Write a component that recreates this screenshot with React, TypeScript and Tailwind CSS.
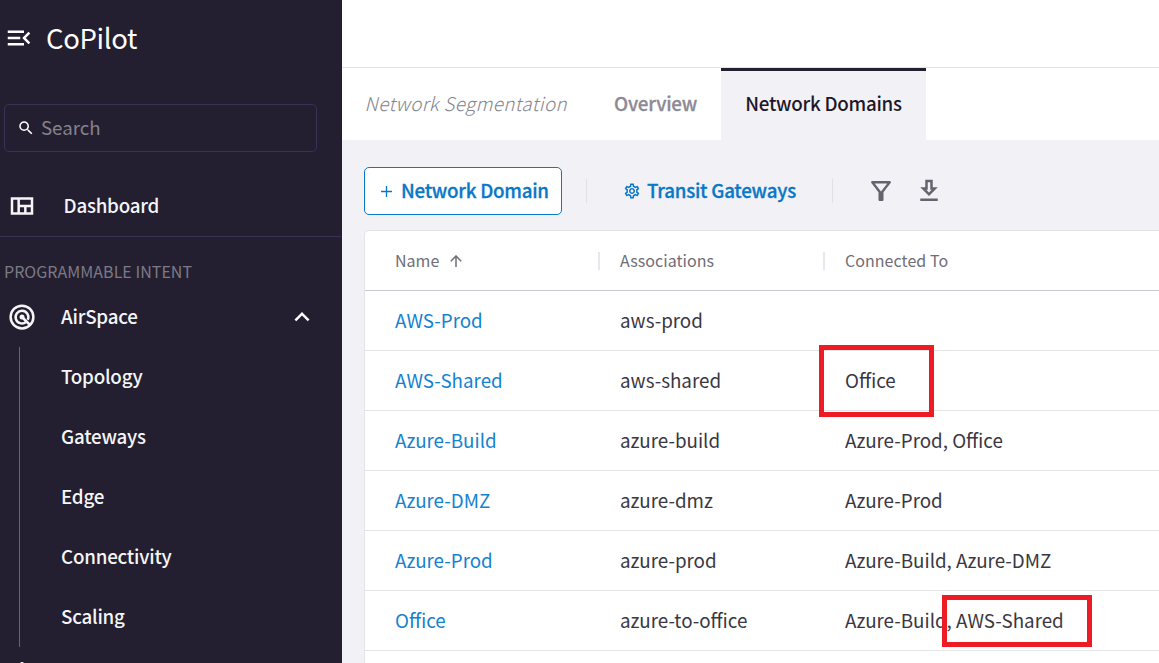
import React from "react";
import {
  MdExpandLess,
  MdMenuOpen,
  MdOutlineDownload,
  MdOutlineFilterAlt,
  MdOutlineSettings,
  MdOutlineViewQuilt,
  MdSearch,
} from "react-icons/md";

const navItems = ["Topology", "Gateways", "Edge", "Connectivity", "Scaling"];

const rows = [
  { name: "AWS-Prod", association: "aws-prod", connected: "" },
  { name: "AWS-Shared", association: "aws-shared", connected: "Office" },
  { name: "Azure-Build", association: "azure-build", connected: "Azure-Prod, Office" },
  { name: "Azure-DMZ", association: "azure-dmz", connected: "Azure-Prod" },
  { name: "Azure-Prod", association: "azure-prod", connected: "Azure-Build, Azure-DMZ" },
  { name: "Office", association: "azure-to-office", connected: "Azure-Build, AWS-Shared" },
];

function RadarIcon() {
  return (
    <svg width="30" height="30" viewBox="0 0 24 24" fill="none" stroke="currentColor" strokeWidth="2">
      <circle cx="12" cy="12" r="9.1" />
      <path d="M15.2 16A5.1 5.1 0 1 1 16.6 14.2" />
      <path d="M12 12l6.2 6.2" />
      <circle cx="12" cy="12" r="2" fill="currentColor" stroke="none" />
    </svg>
  );
}

function Sidebar() {
  return (
    <aside className="flex h-full w-[342px] shrink-0 flex-col overflow-hidden bg-[#231f30] text-[#f5f5f7]">
      <header className="flex h-[76px] shrink-0 items-center pl-[4px] text-white">
        <MdMenuOpen size={30} />
        <h1 className="ml-[12px] pb-[2px] text-[27.5px] leading-[40px] tracking-[-0.35px]">CoPilot</h1>
      </header>

      <div className="mt-[28px] ml-[4px] flex h-[48px] w-[313px] shrink-0 items-center rounded-[5px] border border-[#3a3154] pl-[12px]">
        <MdSearch size={18} className="text-white" />
        <span className="ml-[6px] pb-[2px] text-[18.75px] leading-[24px] tracking-[-0.05px] text-[#85828c]">
          Search
        </span>
      </div>

      <a className="mt-[24px] flex h-[60px] shrink-0 items-center pl-[7px]">
        <MdOutlineViewQuilt size={30} />
        <span className="ml-[26.5px] pb-[3px] text-[18.75px] leading-[24px] font-medium tracking-[-0.23px]">
          Dashboard
        </span>
      </a>
      <div className="h-px w-[341px] shrink-0 bg-[#3a3154]" />

      <h2 className="mt-[22px] shrink-0 pl-[4px] text-[16px] leading-[24px] tracking-[0.04px] text-[#7d7a85]">
        PROGRAMMABLE INTENT
      </h2>

      <a className="mt-[4px] flex h-[60px] shrink-0 items-center pl-[7px]">
        <RadarIcon />
        <span className="ml-[24px] pb-[3px] text-[18.75px] leading-[24px] font-medium tracking-[-0.2px]">
          AirSpace
        </span>
        <MdExpandLess size={30} className="mr-[25px] ml-auto text-white" />
      </a>

      <nav className="ml-[19px] flex shrink-0 flex-col border-l border-[#67646f]">
        {navItems.map((item) => (
          <a
            key={item}
            className="flex h-[60px] items-center pb-[3px] pl-[41px] text-[18.75px] leading-[24px] font-medium tracking-[-0.22px]"
          >
            {item}
          </a>
        ))}
      </nav>
      <div className="mt-[15px] ml-[20px] h-[6px] w-[4px] shrink-0 rounded-t bg-white" />
    </aside>
  );
}

function Tabs() {
  return (
    <div className="flex h-[73px] shrink-0 border-t border-[#e4e4e8] bg-white text-[18.75px] leading-[24px]">
      <span className="flex w-[249px] items-center pb-[2px] pl-[22.5px] font-light tracking-[0.38px] text-[#85838c] italic">
        Network Segmentation
      </span>
      <span className="flex w-[130px] items-center pb-[2px] pl-[23px] font-medium tracking-[-0.2px] text-[#8d8a95] [-webkit-text-stroke:0.3px]">
        Overview
      </span>
      <span className="flex w-[205px] items-center justify-center border-t-[3px] border-[#231f30] bg-[#f2f1f6] pb-[5px] font-medium tracking-[-0.26px] text-[#1c1829]">
        Network Domains
      </span>
    </div>
  );
}

function Toolbar() {
  return (
    <div className="flex h-[90px] shrink-0 items-center pl-[22px] text-[#0a78c8]">
      <button className="mt-[12px] flex h-[48px] w-[198px] items-center rounded-[5px] border border-[#0a78c8] bg-white pl-[15.5px]">
        <svg width="11" height="11" viewBox="0 0 11 11" stroke="currentColor" strokeWidth="1.3">
          <path d="M5.5 0v11M0 5.5h11" />
        </svg>
        <span className="ml-[9.5px] pb-[2px] text-[18.75px] leading-[24px] font-medium tracking-[-0.26px] [-webkit-text-stroke:0.3px]">
          Network Domain
        </span>
      </button>
      <div className="mt-[12px] ml-[24px] h-[24px] w-px bg-[#e1e0e7]" />
      <button className="mt-[12px] ml-[36px] flex h-[48px] items-center">
        <MdOutlineSettings size={18} />
        <span className="ml-[6px] w-[185px] pb-[2px] text-left text-[18.75px] leading-[24px] font-medium tracking-[-0.24px] [-webkit-text-stroke:0.3px]">
          Transit Gateways
        </span>
      </button>
      <div className="mt-[12px] h-[24px] w-px bg-[#e1e0e7]" />
      <MdOutlineFilterAlt size={30} className="mt-[12px] ml-[33px] text-[#66636e]" />
      <MdOutlineDownload size={30} className="mt-[12px] ml-[18px] text-[#66636e]" />
    </div>
  );
}

function Highlight({ className }: { className: string }) {
  return <div className={`pointer-events-none absolute border-[5px] border-[#ed1c24] ${className}`} />;
}

function DomainsTable() {
  return (
    <section className="relative ml-[22px] min-h-0 flex-1 rounded-tl-[5px] border-t border-l border-[#e4e3ea] bg-white">
      <div className="grid h-[60px] grid-cols-[225px_225px_1fr] items-center border-b border-[#cbc9d4] pl-[30px] text-[16px] leading-[24px] text-[#706d77]">
        <div className="flex items-center">
          <span className="pb-[2px]">Name</span>
          <svg
            className="mt-[1px] ml-[10.5px]"
            width="12"
            height="12"
            viewBox="0 0 12 12"
            fill="none"
            stroke="currentColor"
            strokeWidth="1.5"
          >
            <path d="M6 12V1M0.8 6.2L6 1L11.2 6.2" />
          </svg>
          <i className="mr-[20px] ml-auto h-[18px] w-[2px] bg-[#e8e7ed]" />
        </div>
        <div className="flex items-center">
          <span className="pb-[2px] tracking-[0.05px]">Associations</span>
          <i className="mr-[20px] ml-auto h-[18px] w-[2px] bg-[#e8e7ed]" />
        </div>
        <span className="pb-[2px] tracking-[0.05px]">Connected To</span>
      </div>
      {rows.map((row) => (
        <div
          key={row.name}
          className="grid h-[60px] grid-cols-[225px_225px_1fr] items-center border-b border-[#e4e4e7] pb-[2px] pl-[30px] text-[18.8px] leading-[24px] text-[#3a3742]"
        >
          <a className="text-[#1582cf]">{row.name}</a>
          <span>{row.association}</span>
          <span>{row.connected}</span>
        </div>
      ))}
      <Highlight className="top-[114px] left-[454px] h-[72px] w-[115px]" />
      <Highlight className="top-[364px] left-[577px] h-[52px] w-[150px]" />
    </section>
  );
}

export default function App() {
  return (
    <div className="flex h-[663px] w-[1159px] overflow-hidden bg-[#f2f1f6] font-['Noto_Sans_CJK_SC',sans-serif]">
      <Sidebar />
      <main className="flex min-w-0 flex-1 flex-col overflow-hidden">
        <div className="h-[67px] shrink-0 bg-white" />
        <Tabs />
        <Toolbar />
        <DomainsTable />
      </main>
    </div>
  );
}
